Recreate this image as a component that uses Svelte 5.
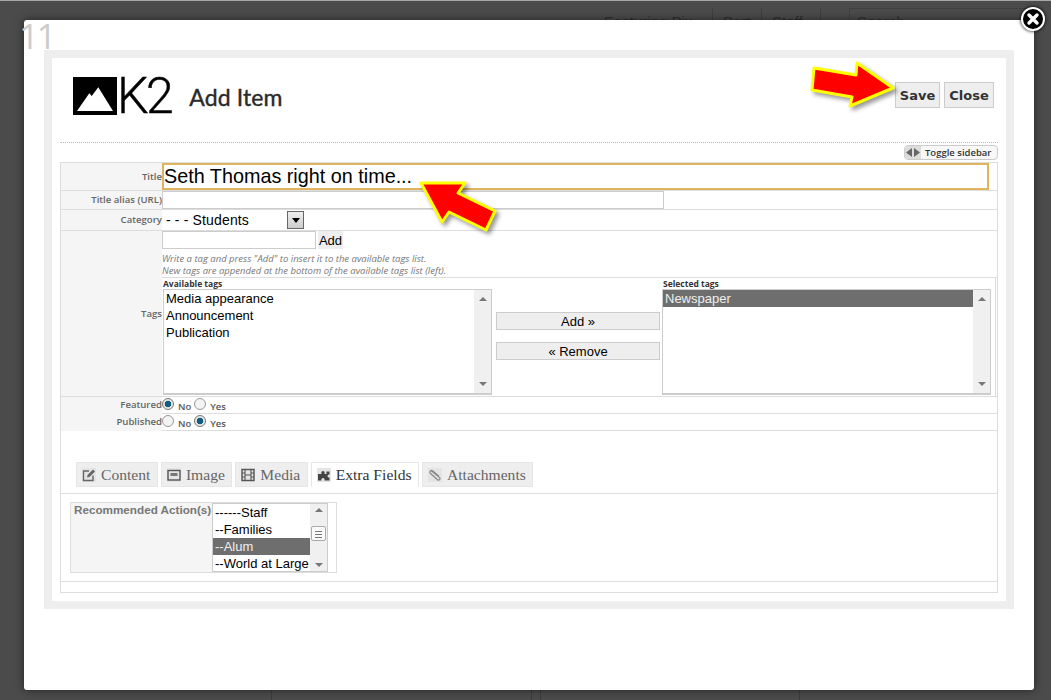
<script>
    let availableTags = ['Media appearance', 'Announcement', 'Publication'];
    let actions = ['------Staff', '--Families', '--Alum', '--World at Large'];
    let tabs = [
        { name: 'Content', icon: 'edit' },
        { name: 'Image', icon: 'image' },
        { name: 'Media', icon: 'film' },
        { name: 'Extra Fields', icon: 'puzzle', active: true },
        { name: 'Attachments', icon: 'clip' }
    ];
</script>

<div class="page">
    <div class="page-nav">
        <span class="nav-item">Featuring Pix</span>
        <span class="nav-item">Part</span>
        <span class="nav-item">Staff</span>
        <span class="nav-search">Search</span>
    </div>
    <div class="page-cols">
        <div class="page-col"></div>
        <div class="page-col"></div>
        <div class="page-col"></div>
        <div class="page-col"></div>
    </div>
</div>

<div class="modal">
    <span class="counter">11</span>
    <button class="modal-close" aria-label="Close">
        <svg width="14" height="14" viewBox="0 0 14 14">
            <path d="M3 3 L11 11 M11 3 L3 11" stroke="#fff" stroke-width="3.4" stroke-linecap="round" />
        </svg>
    </button>

    <div class="frame">
        <header class="head">
            <div class="logo">
                <svg class="logo-mark" width="44" height="38" viewBox="0 0 44 38">
                    <rect width="44" height="38" fill="#000" />
                    <path d="M4 34 L16.3 16.3 L18.7 19 L25.3 10.3 L40 34 Z" fill="#fff" />
                </svg>
                <span class="logo-text">K2</span>
            </div>
            <h1>Add Item</h1>
            <div class="actions">
                <button class="tool save">Save</button>
                <button class="tool close">Close</button>
            </div>
        </header>

        <div class="toggle-row">
            <div class="toggle">
                <span class="toggle-icon">
                    <svg width="14" height="9" viewBox="0 0 14 9">
                        <path d="M6 0 V9 L0 4.5 Z M8 0 V9 L14 4.5 Z" fill="#666" />
                    </svg>
                </span>
                <span class="toggle-label">Toggle sidebar</span>
            </div>
        </div>

        <div class="form">
            <div class="row r-title">
                <div class="label">Title</div>
                <div class="value"><input class="title-input" value="Seth Thomas right on time..." /></div>
            </div>
            <div class="row r-alias">
                <div class="label">Title alias (URL)</div>
                <div class="value"><input class="alias-input" /></div>
            </div>
            <div class="row r-cat">
                <div class="label">Category</div>
                <div class="value">
                    <div class="select">
                        <span>- - - Students</span>
                        <span class="select-btn"><i></i></span>
                    </div>
                </div>
            </div>
            <div class="row r-tags">
                <div class="label">Tags</div>
                <div class="value">
                    <div class="tag-add">
                        <input class="tag-input" />
                        <span class="tag-btn">Add</span>
                    </div>
                    <p class="hint">Write a tag and press "Add" to insert it to the available tags list.<br />New tags are appended at the bottom of the available tags list (left).</p>
                    <div class="tag-cols">
                        <div class="tag-col">
                            <div class="tag-cap">Available tags</div>
                            <div class="listbox">
                                <div class="options">
                                    {#each availableTags as tag}
                                        <div class="option">{tag}</div>
                                    {/each}
                                </div>
                                <div class="scroll"><i class="up"></i><i class="down"></i></div>
                            </div>
                        </div>
                        <div class="tag-mid">
                            <span class="move">Add »</span>
                            <span class="move">« Remove</span>
                        </div>
                        <div class="tag-col">
                            <div class="tag-cap">Selected tags</div>
                            <div class="listbox">
                                <div class="options">
                                    <div class="option sel">Newspaper</div>
                                </div>
                                <div class="scroll"><i class="up"></i><i class="down"></i></div>
                            </div>
                        </div>
                    </div>
                </div>
            </div>
            <div class="row r-radio">
                <div class="label">Featured</div>
                <div class="value radios">
                    <span class="radio on"></span><span class="radio-text">No</span>
                    <span class="radio"></span><span class="radio-text">Yes</span>
                </div>
            </div>
            <div class="row r-radio">
                <div class="label">Published</div>
                <div class="value radios">
                    <span class="radio"></span><span class="radio-text">No</span>
                    <span class="radio on"></span><span class="radio-text">Yes</span>
                </div>
            </div>

            <div class="tabs">
                {#each tabs as tab}
                    <div class="tab" class:active={tab.active}>
                        <span class="tab-icon">
                            <svg width="14" height="14" viewBox="0 0 14 14">
                                {#if tab.icon == 'edit'}
                                    <path d="M11 7.5 V12.5 H1.5 V3 H7" fill="none" stroke="#666" stroke-width="1.4" />
                                    <path d="M5 9.5 L5.5 7 L11 1.5 L13 3.5 L7.5 9 Z" fill="#666" />
                                {:else if tab.icon == 'image'}
                                    <rect x="1" y="2.5" width="12" height="9.5" fill="none" stroke="#555" stroke-width="1.4" />
                                    <path d="M3.5 5 H10.5 V8 H3.5 Z" fill="#777" />
                                {:else if tab.icon == 'film'}
                                    <rect x="1" y="1.5" width="12" height="11" fill="none" stroke="#555" stroke-width="1.4" />
                                    <path d="M4 1.5 V12.5 M10 1.5 V12.5 M4 7 H10 M1 5 H4 M1 9 H4 M10 5 H13 M10 9 H13" stroke="#555" stroke-width="1.1" />
                                {:else if tab.icon == 'puzzle'}
                                    <path d="M1 6 H4.5 C3.8 4 5 3 6 3 C7 3 8.2 4 7.5 6 H9.5 V3.5 H12.5 V6.5 C11.5 6.2 10.5 7.2 10.5 8 C10.5 9 11.5 9.8 12.5 9.5 V12.5 H7.5 C8 11 7 10 6 10 C5 10 4 11 4.5 12.5 H1 Z" fill="#444" />
                                {:else}
                                    <path d="M3 2.5 L11.5 9.5 C13 11 11 13 9.5 11.8 L2.5 5.5 C1 4 2.8 1.5 4.8 3 L11 8.2" fill="none" stroke="#888" stroke-width="1.2" />
                                {/if}
                            </svg>
                        </span>
                        <span>{tab.name}</span>
                    </div>
                {/each}
            </div>

            <div class="panel">
                <div class="extra">
                    <div class="extra-label">Recommended Action(s)</div>
                    <div class="listbox small">
                        <div class="options">
                            {#each actions as action}
                                <div class="option" class:sel={action == '--Alum'}>{action}</div>
                            {/each}
                        </div>
                        <div class="scroll"><i class="up"></i><b class="thumb"></b><i class="down"></i></div>
                    </div>
                </div>
            </div>
            <div class="form-foot"></div>
        </div>
    </div>

    <svg class="arrow arrow-save" width="90" height="52" viewBox="0 0 90 52">
        <path d="M4 8 L46 15 L47 3 L83 28 L40 46 L42 37 L2 30 Z" />
    </svg>
    <svg class="arrow arrow-title" width="84" height="56" viewBox="0 0 84 56">
        <path d="M4 3 L48 3 L41 13 L78 31 L69 50 L32 32 L25 42 Z" />
    </svg>
</div>

<style>
    :global(body) {
        margin: 0;
        background: #4b4b4b;
        overflow: hidden;
    }
    .page {
        height: 700px;
        border-top: 1px solid #a8a8a8;
        box-sizing: border-box;
        display: flex;
        flex-direction: column;
        justify-content: space-between;
        background: #4b4b4b;
    }
    .page-nav {
        display: flex;
        padding: 7px 0 0 604px;
        height: 30px;
        box-sizing: border-box;
        color: #2e2e2e;
        font-family: "Liberation Sans", sans-serif;
        font-size: 15px;
    }
    .nav-item {
        padding: 5px 0 0 10px;
        box-sizing: border-box;
        border-right: 1px solid #3e3e3e;
        white-space: nowrap;
    }
    .nav-item:nth-child(1) { width: 109px; padding-left: 0; }
    .nav-item:nth-child(2) { width: 49px; }
    .nav-item:nth-child(3) { width: 59px; }
    .nav-search {
        margin-left: 28px;
        width: 172px;
        padding: 4px 0 0 7px;
        border: 1px solid #404040;
        border-width: 1px 0 0 1px;
    }
    .page-cols {
        display: flex;
        padding-left: 271px;
        height: 10px;
    }
    .page-col {
        border-left: 1px solid #3d3d3d;
    }
    .page-col:nth-child(1) { width: 259px; }
    .page-col:nth-child(2) { width: 8px; }
    .page-col:nth-child(3) { width: 258px; }

    .modal {
        position: absolute;
        left: 24px;
        top: 20px;
        width: 1010px;
        height: 670px;
        box-sizing: border-box;
        padding: 30px 20px;
        background: #fff;
        border-radius: 3px;
        box-shadow: 0 0 8px rgba(0, 0, 0, 0.55);
    }
    .counter {
        position: absolute;
        left: -5px;
        top: 0;
        font-family: "Open Sans", sans-serif;
        font-size: 35px;
        font-weight: 400;
        line-height: 32px;
        letter-spacing: -2.5px;
        color: #ccc;
    }
    .modal-close {
        position: absolute;
        right: -11px;
        top: -13px;
        width: 24px;
        height: 24px;
        padding: 0;
        border: 2px solid #fff;
        border-radius: 50%;
        background: #000;
        box-shadow: 0 0 3px 1px rgba(0, 0, 0, 0.6);
        display: flex;
        align-items: center;
        justify-content: center;
    }

    .frame {
        height: 559px;
        box-sizing: border-box;
        border: 8px solid #eee;
        padding: 0 8px;
    }
    .head {
        height: 85px;
        box-sizing: border-box;
        border-bottom: 1px dotted #bbb;
        display: flex;
        align-items: flex-start;
        padding: 19px 4px 0 13px;
    }
    .logo {
        display: flex;
        align-items: center;
        height: 38px;
    }
    .logo-text {
        font-family: "Roboto", sans-serif;
        font-weight: 300;
        font-size: 50px;
        letter-spacing: -2.5px;
        color: #000;
        line-height: 38px;
        -webkit-text-stroke: 0.4px #000;
    }
    h1 {
        margin: 6px 0 0 18px;
        font-family: "Lato", sans-serif;
        font-weight: 400;
        font-size: 23px;
        line-height: 28px;
        letter-spacing: 0.1px;
        color: #2b2b2b;
        -webkit-text-stroke: 0.4px #2b2b2b;
    }
    .actions {
        margin-left: auto;
        margin-top: 5px;
        display: flex;
        gap: 4px;
    }
    .tool {
        height: 26px;
        padding: 0;
        border: 1px solid #ccc;
        background: #eee;
        font-family: "DejaVu Sans", sans-serif;
        font-weight: 700;
        font-size: 13px;
        color: #333;
    }
    .save { width: 45px; }
    .close { width: 50px; }

    .toggle-row {
        display: flex;
        justify-content: flex-end;
        height: 19px;
        padding-top: 2px;
        box-sizing: border-box;
    }
    .toggle {
        width: 94px;
        height: 15px;
        box-sizing: border-box;
        border: 1px solid #ccc;
        border-radius: 4px;
        display: flex;
        align-items: center;
        background: #f8f8f8;
    }
    .toggle-icon {
        width: 16px;
        height: 13px;
        background: #ddd;
        border-radius: 3px 0 0 3px;
        display: flex;
        align-items: center;
        justify-content: center;
    }
    .toggle-label {
        margin-left: 4px;
        font-family: "Open Sans", sans-serif;
        font-weight: 600;
        font-size: 9.5px;
        color: #333;
        white-space: nowrap;
    }

    .form {
        border: 1px solid #ddd;
        height: 431px;
        box-sizing: border-box;
    }
    .row {
        display: grid;
        grid-template-columns: 101px 1fr;
        border-bottom: 1px solid #ddd;
        box-sizing: border-box;
    }
    .r-title { height: 28px; }
    .r-alias { height: 19px; }
    .r-cat { height: 21px; }
    .r-tags { height: 166px; }
    .r-radio { height: 17px; }
    .label {
        background: #f5f5f5;
        text-align: right;
        font-family: "Open Sans", sans-serif;
        font-weight: 600;
        font-size: 9.6px;
        color: #666;
        display: flex;
        align-items: center;
        justify-content: flex-end;
        padding-bottom: 1px;
        box-sizing: border-box;
    }
    .r-radio .label {
        align-items: flex-start;
        line-height: 15px;
    }
    .value {
        min-width: 0;
    }
    input {
        display: block;
        box-sizing: border-box;
        outline: none;
        background: #fff;
        padding: 0;
        font-family: "Liberation Sans", sans-serif;
    }
    .title-input {
        width: 827px;
        height: 27px;
        border: 2px solid #e0b35f;
        font-size: 19.8px;
        color: #000;
    }
    .alias-input {
        width: 502px;
        height: 18px;
        border: 1px solid #ccc;
    }
    .select {
        width: 142px;
        height: 20px;
        box-sizing: border-box;
        display: flex;
        justify-content: space-between;
        align-items: center;
        padding-left: 4px;
        font-family: "Liberation Sans", sans-serif;
        font-size: 14px;
        letter-spacing: 0.15px;
        color: #000;
    }
    .select-btn {
        width: 17px;
        height: 18px;
        box-sizing: border-box;
        border: 1px solid #666;
        background: linear-gradient(#eee, #ccc);
        display: flex;
        align-items: center;
        justify-content: center;
    }
    .select-btn i {
        border: 4px solid transparent;
        border-top: 5px solid #000;
        border-bottom: 0;
    }
    .tag-add {
        display: flex;
        gap: 2px;
        height: 18px;
    }
    .tag-input {
        width: 154px;
        height: 18px;
        border: 1px solid #ccc;
    }
    .tag-btn {
        width: 25px;
        height: 18px;
        background: #eee;
        font-family: "Liberation Sans", sans-serif;
        font-size: 13px;
        line-height: 19px;
        text-align: center;
        color: #000;
    }
    .hint {
        margin: 0;
        height: 28px;
        padding-top: 4px;
        box-sizing: border-box;
        font-family: "Open Sans", sans-serif;
        font-style: italic;
        font-size: 9.5px;
        line-height: 12px;
        color: #777;
        white-space: nowrap;
    }
    .tag-cols {
        display: flex;
        border-top: 1px solid #ddd;
        height: 119px;
        box-sizing: border-box;
    }
    .tag-col {
        width: 331px;
        padding-left: 1px;
        box-sizing: border-box;
        flex: none;
    }
    .tag-col:last-child {
        width: 334px;
        padding-left: 0;
        border-right: 1px solid #ddd;
    }
    .tag-cap {
        height: 11px;
        padding-left: 1px;
        font-family: "Open Sans", sans-serif;
        font-weight: 700;
        font-size: 8.5px;
        line-height: 12px;
        color: #333;
    }
    .tag-col:first-child .tag-cap {
        padding-left: 0;
    }
    .listbox {
        display: flex;
        width: 329px;
        height: 106px;
        box-sizing: border-box;
        border: 1px solid #ccc;
        border-bottom-width: 2px;
        font-family: "Liberation Sans", sans-serif;
        font-size: 13px;
        line-height: 17px;
        color: #000;
    }
    .options {
        flex: 1;
        min-width: 0;
    }
    .option {
        height: 17px;
        padding-left: 2px;
        white-space: nowrap;
    }
    .option.sel {
        background: #6e6e6e;
        color: #eee;
    }
    .scroll {
        width: 17px;
        flex: none;
        background: #f0f0f0;
        display: flex;
        flex-direction: column;
        align-items: center;
        justify-content: space-between;
        padding: 7px 0;
        box-sizing: border-box;
    }
    .scroll i {
        border: 4px solid transparent;
    }
    .scroll .up {
        border-top: 0;
        border-bottom: 4px solid #777;
    }
    .scroll .down {
        border-bottom: 0;
        border-top: 4px solid #777;
    }
    .thumb {
        width: 15px;
        height: 15px;
        margin-top: 14px;
        box-sizing: border-box;
        border: 1px solid #aaa;
        border-radius: 2px;
        background: repeating-linear-gradient(#fafafa 0 2px, #777 2px 3px);
        background-size: 7px 9px;
        background-position: center;
        background-repeat: no-repeat;
        background-color: #fafafa;
    }
    .listbox.small .down {
        margin-top: auto;
    }
    .tag-mid {
        width: 169px;
        flex: none;
        padding: 34px 2px 0 3px;
        box-sizing: border-box;
        display: flex;
        flex-direction: column;
        gap: 12px;
    }
    .move {
        height: 18px;
        box-sizing: border-box;
        border: 1px solid #ccc;
        background: #eee;
        text-align: center;
        font-family: "Liberation Sans", sans-serif;
        font-size: 13px;
        line-height: 17px;
        color: #000;
    }
    .radios {
        display: flex;
        align-items: flex-start;
    }
    .radio {
        width: 12px;
        height: 12px;
        box-sizing: border-box;
        border: 1px solid #999;
        border-radius: 50%;
        background: #f4f4f4;
        margin-top: 1px;
    }
    .radio.on {
        background: radial-gradient(circle, #0f5d80 0 3px, #e8e8e8 3.6px);
        border-color: #777;
    }
    .radio-text {
        font-family: "Open Sans", sans-serif;
        font-weight: 600;
        font-size: 9.5px;
        line-height: 14px;
        margin: 3px 3px 0 4px;
        color: #555;
    }

    .tabs {
        display: flex;
        gap: 3px;
        margin-top: 31px;
        padding-left: 15px;
        height: 31px;
        box-sizing: border-box;
    }
    .tab {
        height: 25px;
        box-sizing: border-box;
        display: flex;
        align-items: center;
        gap: 5px;
        padding: 0 6.5px 0 5px;
        background: #eee;
        border: 1px solid #e6e6e6;
        font-family: "Liberation Serif", serif;
        font-size: 15.6px;
        color: #666;
    }
    .tab.active {
        background: #fff;
        border-bottom-color: #fff;
        color: #333;
    }
    .tab-icon {
        width: 14px;
        height: 14px;
        display: flex;
        background: #e4e4e4;
    }
    .panel {
        border-top: 1px solid #ddd;
        border-bottom: 1px solid #ddd;
        height: 89px;
        box-sizing: border-box;
        padding: 8px 0 0 9px;
    }
    .extra {
        display: flex;
        width: 267px;
        height: 71px;
        box-sizing: border-box;
        border: 1px solid #ddd;
    }
    .extra-label {
        width: 141px;
        background: #f5f5f5;
        padding: 0 0 0 3px;
        box-sizing: border-box;
        font-family: "Liberation Sans", sans-serif;
        font-weight: 700;
        font-size: 11.7px;
        line-height: 14px;
        color: #777;
        white-space: nowrap;
    }
    .listbox.small {
        width: 116px;
        height: 69px;
        border-bottom-width: 1px;
    }
    .listbox.small .scroll {
        padding: 4px 0;
    }
    .form-foot {
        height: 10px;
    }

    .arrow {
        position: absolute;
        overflow: visible;
        filter: drop-shadow(3px 3px 2px rgba(0, 0, 0, 0.4));
    }
    .arrow path {
        fill: #f00;
        stroke: #ff0;
        stroke-width: 3;
        stroke-linejoin: round;
    }
    .arrow-save {
        left: 786px;
        top: 40px;
    }
    .arrow-title {
        left: 393px;
        top: 160px;
    }
</style>
